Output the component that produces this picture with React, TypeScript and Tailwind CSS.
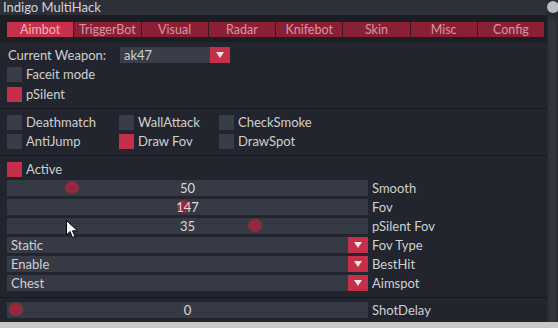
import React from "react";

const tabs = ["Aimbot", "TriggerBot", "Visual", "Radar", "Knifebot", "Skin", "Misc", "Config"];

const Check = ({ on = false, label }: { on?: boolean; label: string }) => (
  <div className="flex items-center h-[16px] gap-[4px]">
    <span className={`w-[15px] h-[15px] shrink-0 ${on ? "bg-[#c52f47]" : "bg-[#393d47]"}`} />
    <span className="leading-[16px] whitespace-nowrap">{label}</span>
  </div>
);

const Arrow = () => (
  <span className="w-[20px] h-full bg-[#c52f47] flex items-center justify-center shrink-0">
    <svg width="10" height="8" viewBox="0 0 10 8">
      <path d="M1 1 H9 L5 7 Z" fill="#f2e6e8" />
    </svg>
  </span>
);

const Slider = ({ value, knob, label }: { value: string; knob: number; label: string }) => (
  <div className="flex items-center h-[16px]">
    <div className="relative w-[361px] h-full bg-[#363a45] flex items-center justify-center">
      <span
        className="absolute top-[1px] w-[14px] h-[13px] rounded-full bg-[#93293e] blur-[0.6px]"
        style={{ left: knob - 7 }}
      />
      <span className="relative leading-[16px] text-[#dadada]">{value}</span>
    </div>
    <span className="ml-[4px] leading-[16px]">{label}</span>
  </div>
);

const Combo = ({ value, label }: { value: string; label: string }) => (
  <div className="flex items-center h-[16px]">
    <div className="w-[361px] h-full bg-[#363a45] flex items-center">
      <span className="flex-1 pl-[4px] leading-[16px]">{value}</span>
      <Arrow />
    </div>
    <span className="ml-[4px] leading-[16px]">{label}</span>
  </div>
);

const Sep = () => <div className="h-[2px] -ml-[7px] mr-[-4px] border-t border-[#15171b] border-b-[#2a2d35]" />;

export default function App() {
  return (
    <div
      className="w-[558px] h-[328px] bg-[#c8c8c8] relative overflow-hidden text-[13px] text-[#d0d0d0]"
      style={{ fontFamily: "Lato, 'Noto Sans', sans-serif" }}
    >
      <div className="h-[322px] flex bg-[#22252d]">
        <div className="w-[547px] flex flex-col">
          <div className="h-[15px] bg-[#2d3038] pl-[3px] leading-[15px] text-[#d4d4d4] whitespace-nowrap">
            Indigo MultiHack
          </div>
          <div className="h-[27px] bg-[#1c1e24] pt-[7px] pl-[7px] pr-[3px]">
            <div className="flex h-[15px]">
              {tabs.map((t, i) => (
                <div
                  key={t}
                  className={`flex-1 flex items-center justify-center text-[12.5px] leading-[15px] ${
                    i === 0 ? "bg-[#c7304a] text-[#f6b3bd]" : "bg-[#8a2035] text-[#d795a2] border-l border-[#3a1820]"
                  }`}
                >
                  {t}
                </div>
              ))}
            </div>
          </div>
          <div className="pl-[7px] flex flex-col">
            <div className="mt-[5px] flex items-center h-[16px]">
              <span className="w-[113px] pl-[1px] leading-[16px]">Current Weapon:</span>
              <div className="w-[110px] h-full bg-[#393d47] flex items-center">
                <span className="flex-1 pl-[4px] leading-[16px]">ak47</span>
                <Arrow />
              </div>
            </div>
            <div className="mt-[3px]">
              <Check label="Faceit mode" />
            </div>
            <div className="mt-[4px]">
              <Check on label="pSilent" />
            </div>
            <div className="mt-[6px]">
              <Sep />
            </div>
            <div className="mt-[4px] grid grid-cols-[112px_100px_120px] gap-y-[3px]">
              <Check label="Deathmatch" />
              <Check label="WallAttack" />
              <Check label="CheckSmoke" />
              <Check label="AntiJump" />
              <Check on label="Draw Fov" />
              <Check label="DrawSpot" />
            </div>
            <div className="mt-[6px]">
              <Sep />
            </div>
            <div className="mt-[4px]">
              <Check on label="Active" />
            </div>
            <div className="mt-[3px] flex flex-col gap-[3px]">
              <Slider value="50" knob={65} label="Smooth" />
              <Slider value="147" knob={177} label="Fov" />
              <Slider value="35" knob={248} label="pSilent Fov" />
              <Combo value="Static" label="Fov Type" />
              <Combo value="Enable" label="BestHit" />
              <Combo value="Chest" label="Aimspot" />
            </div>
            <div className="mt-[6px]">
              <Sep />
            </div>
            <div className="mt-[3px]">
              <Slider value="0" knob={9} label="ShotDelay" />
            </div>
          </div>
        </div>
        <div className="w-[11px] flex flex-col items-center bg-[#272b33]">
          <span className="mt-[1px] w-[12px] h-[12px] rounded-full bg-[#b9bcc3]" />
          <span className="mt-[6px] w-[7px] flex-1 bg-[#2e353c]" />
        </div>
      </div>
      <svg className="absolute left-[66px] top-[220px]" width="13" height="19" viewBox="0 0 13 19">
        <path d="M0.5 0.5 L0.5 15 L4 11.5 L6.5 17.5 L9 16.5 L6.5 10.8 L11.5 10.8 Z" fill="#ffffff" stroke="#000000" strokeWidth="1" strokeLinejoin="round" />
      </svg>
    </div>
  );
}
